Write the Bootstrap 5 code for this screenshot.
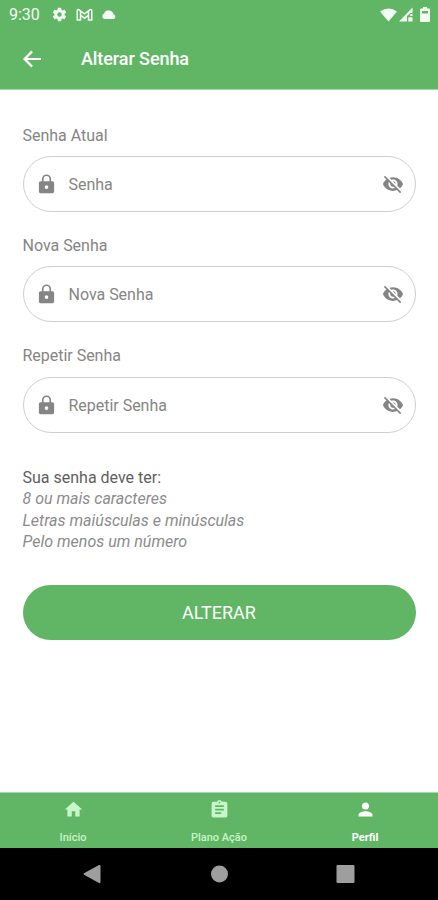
<!DOCTYPE html>
<html lang="pt-BR">
<head>
<meta charset="utf-8">
<meta name="viewport" content="width=device-width, initial-scale=1">
<title>Alterar Senha</title>
<link href="https://cdn.jsdelivr.net/npm/bootstrap@5.3.0/dist/css/bootstrap.min.css" rel="stylesheet">
<style>
:root{--brand:#61b665}
html,body{height:100%}
body{font-family:Roboto,"Liberation Sans",sans-serif;background:#fff;overflow:hidden}
svg{display:block;fill:currentColor;flex:none}
.screen{height:900px}
.top-area{background:var(--brand);height:90px;border-bottom:1px solid #a9d6ab}
.status-line{height:28px;padding:1px 8px 0 9px;font-size:16px;color:#f4fbf4}
.status-line .gear{margin-left:11px}
.status-line .mail,.status-line .cloud{margin-left:8px}
.status-line .signal{margin-left:2px}
.status-line .battery{margin-left:7px}
.title-line{height:61px;padding-left:20px}
.title-line h1{font-size:18px;font-weight:500;margin-left:37px;line-height:24px;letter-spacing:-.08px}
.content{padding:33.5px 22.5px 0 22.5px}
.form-label{display:block;font-size:16px;line-height:24px;height:24px;letter-spacing:-.02px;margin-bottom:8.5px;color:#858585}
.field{height:56px;border:1.4px solid #cfcfcf!important;padding:0 11px;margin-bottom:21.9px;color:#858585}
.field .form-control{font-size:16px;letter-spacing:-.02px;padding:1.5px 0 0 11px;color:#777;line-height:24px}
.field .form-control::placeholder{color:#858585;opacity:1}
.field .form-control:focus{box-shadow:none}
.rules{font-size:16px;line-height:21.5px;color:#8c8c8c;margin-top:34px}
.rules p{color:#606060}
.btn-brand{--bs-btn-bg:var(--brand);--bs-btn-color:#fff;--bs-btn-hover-bg:#54a758;--bs-btn-hover-color:#fff;height:55px;font-size:18px;margin-top:32px;border:0}
.tabs{background:var(--brand);height:56px;border-top:1px solid #a9d6ab}
.tabs a{color:#c8f5c9;font-size:11px;font-weight:500;line-height:14px;padding-top:6px}
.tabs a.active{color:#fff;font-weight:700}
.tabs span{margin-top:11px}
.system-keys{height:52px;background:#000;color:#9e9e9e;padding:0 83px}
</style>
<script src="https://cdn.jsdelivr.net/npm/bootstrap@5.3.0/dist/js/bootstrap.bundle.min.js"></script>
</head>
<body>
<svg class="d-none">
<symbol id="lock" viewBox="0 0 24 24"><path d="M18.500 9H17V6.500a5 5 0 0 0-10 0V9H5.500A1.800 1.800 0 0 0 3.700 10.800v9.400A1.800 1.800 0 0 0 5.500 22h13a1.800 1.800 0 0 0 1.800-1.800v-9.400A1.800 1.800 0 0 0 18.500 9zM12 17.400a2 2 0 1 1 0-4 2 2 0 0 1 0 4zM15.200 9H8.800V6.500a3.200 3.200 0 0 1 6.400 0z"/></symbol>
<symbol id="eye-off" viewBox="0 0 24 24"><path d="M12 7c2.760 0 5 2.240 5 5 0 .65-.13 1.260-.36 1.830l2.920 2.920c1.510-1.260 2.700-2.890 3.430-4.750-1.730-4.390-6-7.500-11-7.500-1.400 0-2.740.25-3.980.7l2.160 2.160C10.740 7.130 11.350 7 12 7zM2 4.270l2.280 2.280.46.46C3.080 8.300 1.780 10.020 1 12c1.730 4.390 6 7.500 11 7.500 1.550 0 3.030-.3 4.380-.84l.42.42L19.730 22 21 20.730 3.270 3 2 4.270zM7.530 9.800l1.550 1.550c-.05.21-.08.43-.08.65 0 1.660 1.340 3 3 3 .22 0 .44-.03.65-.08l1.550 1.550c-.67.33-1.410.53-2.200.53-2.760 0-5-2.240-5-5 0-.79.2-1.530.53-2.200zm4.310-.78l3.150 3.150.02-.16c0-1.660-1.340-3-3-3l-.17.010z"/></symbol>
</svg>
<main class="screen d-flex flex-column">
<header class="top-area text-white">
<div class="status-line d-flex align-items-center">
<span>9:30</span>
<svg class="gear" width="17" height="17" viewBox="0 0 24 24"><path d="M19.140 12.940a7 7 0 0 0 0-1.880l2.030-1.580a.5.5 0 0 0 .12-.61l-1.920-3.320a.5.5 0 0 0-.59-.22l-2.390.96a7 7 0 0 0-1.620-.94l-.36-2.540A.5.5 0 0 0 13.920 2.400h-3.840a.5.5 0 0 0-.47.41l-.36 2.540a7 7 0 0 0-1.620.94l-2.390-.96a.5.5 0 0 0-.59.22L2.740 8.870a.5.5 0 0 0 .12.61l2.030 1.580a7 7 0 0 0 0 1.880l-2.030 1.580a.5.5 0 0 0-.12.61l1.920 3.320c.12.22.37.29.59.22l2.390-.96c.5.38 1.030.7 1.620.94l.36 2.540c.05.24.24.41.48.41h3.840a.5.5 0 0 0 .47-.41l.36-2.540a7 7 0 0 0 1.620-.94l2.390.96c.22.08.47 0 .59-.22l1.920-3.320a.5.5 0 0 0-.12-.61zM12 15.200a3.200 3.200 0 1 1 0-6.400 3.200 3.200 0 0 1 0 6.400z"/></svg>
<svg class="mail" width="17" height="14" viewBox="0 0 17 14"><path d="M1.200 12V3q0-2 2-1.200l5.300 4 5.300-4q2-.8 2 1.200v9h-3.300V7.200L8.500 10.200 4.500 7.200V12zM4.500 7.200V3M12.500 7.200V3" fill="none" stroke="currentColor" stroke-width="1.500"/></svg>
<svg class="cloud" width="16" height="10" viewBox="0 0 16 10"><path d="M3.300 9a3 3 0 0 1-.2-5.600A5 5 0 0 1 12.500 4a2.750 2.750 0 0 1 .4 5z"/></svg>
<svg class="ms-auto" width="17" height="14" viewBox="0 0 18 14"><path d="M0 3.300Q9-3 18 3.300L9 14z"/></svg>
<svg class="signal" width="14" height="15" viewBox="0 0 15 15"><path d="M0 15 14.500 0v6H12L8.500 9.500V15zM10 10.500h4.500V15H10zM12 7h2.500v2H12z"/></svg>
<svg class="battery" width="10" height="15" viewBox="0 0 10 15"><path fill-rule="evenodd" d="M3 0h4v1.500h2q1 0 1 1V14q0 1-1 1H1q-1 0-1-1V2.500q0-1 1-1h2zM2 4v2.500h6V4z"/></svg>
</div>
<div class="title-line d-flex align-items-center">
<svg width="24" height="24" viewBox="0 0 24 24"><path d="M21 10.900H7.200l5.700-5.700-1.600-1.600L3 12l8.300 8.400 1.600-1.600-5.700-5.700H21z"/></svg>
<h1 class="mb-0">Alterar Senha</h1>
</div>
</header>
<section class="content flex-grow-1">
<label class="form-label" for="current">Senha Atual</label>
<div class="field rounded-pill d-flex align-items-center"><svg width="23" height="22"><use href="#lock"/></svg><input id="current" type="password" class="form-control border-0 bg-transparent" placeholder="Senha"><svg width="22" height="22"><use href="#eye-off"/></svg></div>
<label class="form-label" for="fresh">Nova Senha</label>
<div class="field rounded-pill d-flex align-items-center"><svg width="23" height="22"><use href="#lock"/></svg><input id="fresh" type="password" class="form-control border-0 bg-transparent" placeholder="Nova Senha"><svg width="22" height="22"><use href="#eye-off"/></svg></div>
<label class="form-label" for="repeat">Repetir Senha</label>
<div class="field rounded-pill d-flex align-items-center"><svg width="23" height="22"><use href="#lock"/></svg><input id="repeat" type="password" class="form-control border-0 bg-transparent" placeholder="Repetir Senha"><svg width="22" height="22"><use href="#eye-off"/></svg></div>
<div class="rules"><p class="mb-0">Sua senha deve ter:</p><ul class="list-unstyled fst-italic mb-0"><li>8 ou mais caracteres</li><li>Letras maiúsculas e minúsculas</li><li>Pelo menos um número</li></ul></div>
<button type="button" class="btn btn-brand rounded-pill w-100">ALTERAR</button>
</section>
<nav class="tabs row g-0 text-center">
<a href="#" class="col text-decoration-none d-flex flex-column align-items-center"><svg width="21" height="21" viewBox="0 0 24 24"><path d="M10 20v-6h4v6h5v-8h3L12 3 2 12h3v8z"/></svg><span>Início</span></a>
<a href="#" class="col text-decoration-none d-flex flex-column align-items-center"><svg width="21" height="21" viewBox="0 0 24 24"><path d="M19 3h-4.180a3 3 0 0 0-5.640 0H5a2 2 0 0 0-2 2v14c0 1.100.9 2 2 2h14a2 2 0 0 0 2-2V5a2 2 0 0 0-2-2zm-7 0a1 1 0 1 1 0 2 1 1 0 0 1 0-2zm2 14H7v-2h7zm3-4H7v-2h10zm0-4H7V7h10z"/></svg><span>Plano Ação</span></a>
<a href="#" class="col active text-decoration-none d-flex flex-column align-items-center"><svg width="21" height="21" viewBox="0 0 24 24"><path d="M12 12a4 4 0 1 0 0-8 4 4 0 0 0 0 8zm0 2c-2.670 0-8 1.340-8 4v2h16v-2c0-2.660-5.330-4-8-4z"/></svg><span>Perfil</span></a>
</nav>
<footer class="system-keys d-flex align-items-center justify-content-between">
<svg width="19" height="20" viewBox="0 0 19 20"><path d="M1 9.200 16 1q1.500-.5 1.500 1v16q0 1.500-1.500 1L1 10.800q-1-.8 0-1.600z"/></svg>
<svg width="18" height="18" viewBox="0 0 18 18"><circle cx="9.500" cy="9" r="8.500"/></svg>
<svg width="19" height="20" viewBox="0 0 19 20"><rect x=".5" y="1" width="18" height="18" rx="1"/></svg>
</footer>
</main>
</body>
</html>
